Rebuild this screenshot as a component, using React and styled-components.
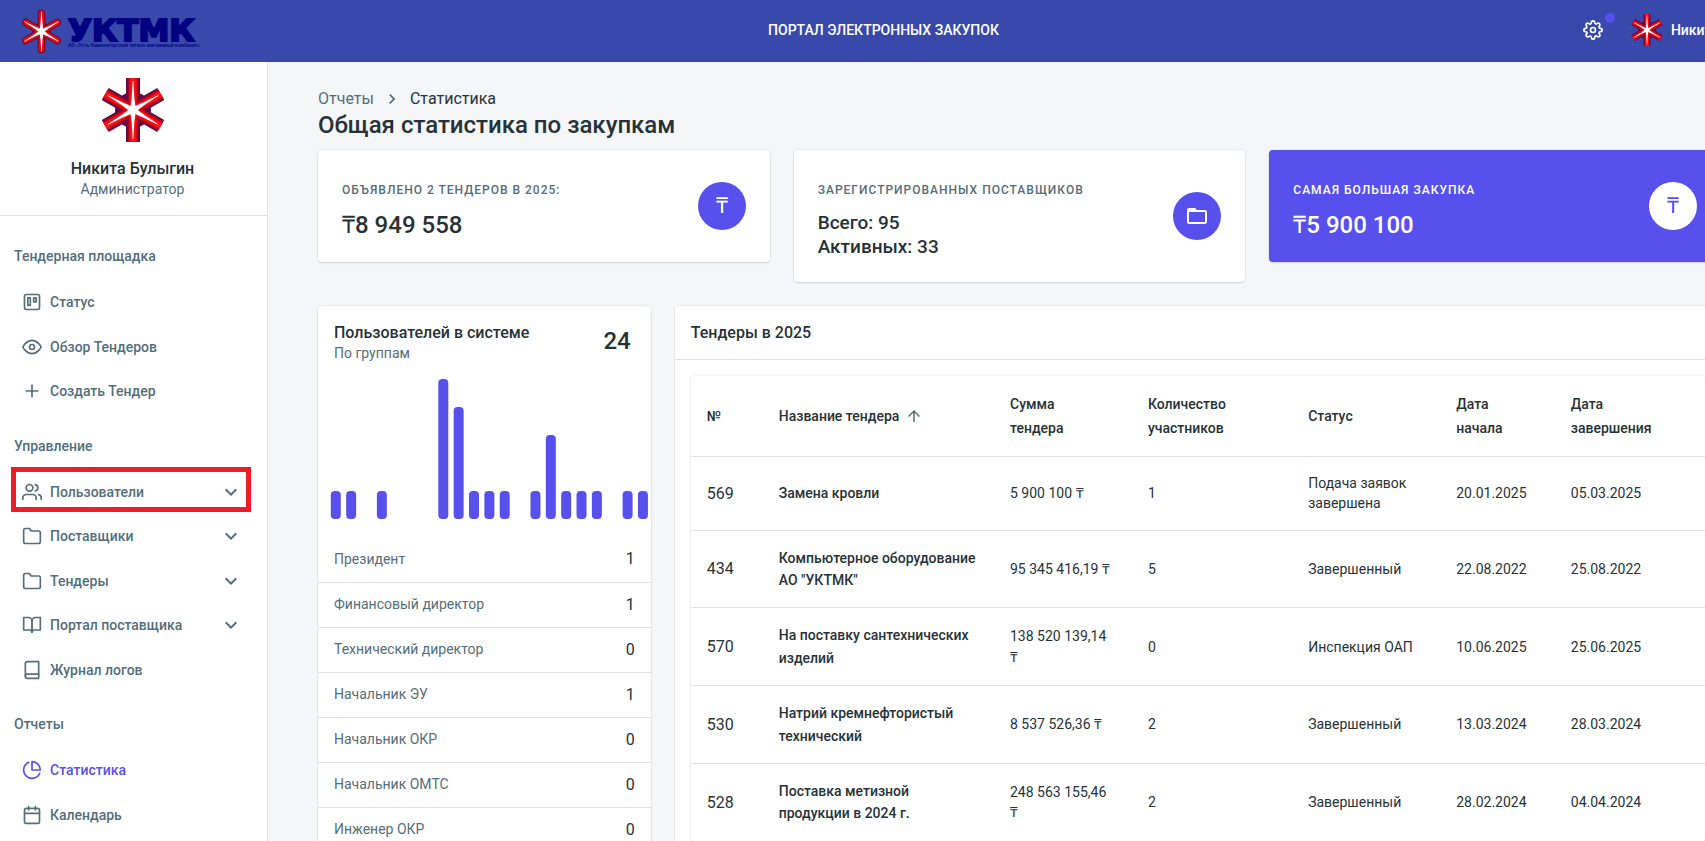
import React from "react";
import styled, { createGlobalStyle, css } from "styled-components";
import {
  FiTrello, FiEye, FiPlus, FiUsers, FiFolder, FiBookOpen, FiBook,
  FiPieChart, FiCalendar, FiSettings,
} from "react-icons/fi";
import { MdExpandMore, MdFolderOpen, MdArrowUpward, MdNavigateNext } from "react-icons/md";

const color = {
  header: "#3949ab",
  accent: "#5850ec",
  page: "#f4f6f8",
  text: "#263238",
  muted: "#546e7a",
  line: "#e0e0e0",
};

const GlobalStyle = createGlobalStyle`
  *, *::before, *::after { box-sizing: border-box; }
  body {
    margin: 0;
    background: ${color.page};
    color: ${color.text};
    font-family: Roboto, "Liberation Sans", sans-serif;
    font-size: 14px;
  }
  h1, h2, p, ul { margin: 0; padding: 0; }
  ul { list-style: none; }
  button { font: inherit; border: 0; background: none; padding: 0; cursor: pointer; }
  a { color: inherit; text-decoration: none; }
`;

const Viewport = styled.div`
  height: 100vh;
  overflow: auto;
  scrollbar-width: none;
`;

const Shell = styled.div`
  width: calc(100% + 62px);
  min-height: 100%;
  display: flex;
  flex-direction: column;
`;

const Header = styled.header`
  height: 62px;
  display: grid;
  grid-template-columns: 1fr auto 1fr;
  align-items: center;
  background: ${color.header};
  color: #fff;
`;

const Brand = styled.a`
  display: flex;
  align-items: center;
  gap: 7px;
  padding-left: 22px;
`;

const BrandText = styled.span`
  display: flex;
  flex-direction: column;
  padding-top: 4px;
  color: #000080;
  white-space: nowrap;
`;

const BrandName = styled.span`
  font: 700 31px/24px "DejaVu Sans", sans-serif;
  -webkit-text-stroke: 2px #000080;
`;

const BrandNote = styled.span`
  font: 500 5px/7px Roboto, sans-serif;
`;

const PortalTitle = styled.p`
  font-weight: 500;
  line-height: 20px;
  padding-bottom: 3px;
`;

const Actions = styled.div`
  display: flex;
  align-items: center;
  justify-content: flex-end;
  margin-right: -12px;
  padding-bottom: 2px;
  white-space: nowrap;
`;

const SettingsButton = styled.button`
  position: relative;
  display: flex;
  color: #fff;
  margin-right: 28px;
`;

const Dot = styled.span`
  position: absolute;
  top: -7px;
  right: -12px;
  width: 10px;
  height: 10px;
  border-radius: 50%;
  background: ${color.accent};
`;

const AccountButton = styled.button`
  display: flex;
  align-items: center;
  gap: 8px;
  color: #fff;
  font-weight: 500;
`;

const Body = styled.div`
  flex: 1;
  display: flex;
`;

const Sidebar = styled.aside`
  flex: none;
  width: 268px;
  background: #fff;
  border-right: 1px solid ${color.line};
`;

const Profile = styled.div`
  display: flex;
  flex-direction: column;
  align-items: center;
  padding: 16px 2px 15px 0;
  border-bottom: 1px solid ${color.line};
`;

const ProfileName = styled.p`
  margin-top: 17px;
  font-size: 16px;
  font-weight: 500;
  line-height: 20px;
`;

const ProfileRole = styled.p`
  color: ${color.muted};
  line-height: 21px;
`;

const Nav = styled.nav`
  display: flex;
  flex-direction: column;
  gap: 8px;
  padding: 16px 13px 16px 14px;
  color: ${color.muted};
  font-weight: 500;
`;

const NavHeading = styled.h2`
  font-size: 14px;
  font-weight: 500;
  line-height: 48px;
`;

const NavItem = styled.li`
  position: relative;
  ${(p) => p.$marked && css`
    &::after {
      content: "";
      position: absolute;
      inset: -3px 3px 2px -3px;
      border: 5px solid #ee1c24;
      pointer-events: none;
    }
  `}
`;

const navRow = css`
  width: 100%;
  display: flex;
  align-items: center;
  gap: 8px;
  padding: 10px 11px 10px 8px;
  line-height: 1.75;
  color: ${(p) => (p.$active ? color.accent : color.muted)};
`;

const NavLink = styled.a`${navRow}`;
const NavToggle = styled.button`
  ${navRow}
  font-weight: 500;
  text-align: left;
`;
const NavLabel = styled.span`flex: 1;`;

const Main = styled.main`
  flex: 1;
  min-width: 0;
  padding: 25px 46px 24px 50px;
`;

const Crumbs = styled.nav`
  display: flex;
  align-items: center;
  gap: 8px;
  font-size: 16px;
  line-height: 24px;
  a, svg { color: ${color.muted}; }
`;

const PageTitle = styled.h1`
  font-size: 24px;
  font-weight: 500;
  line-height: 28px;
  margin-bottom: 11px;
`;

const Grid = styled.div`
  display: grid;
  grid-template-columns: repeat(12, minmax(0, 1fr));
  align-items: start;
  gap: 24px;
`;

const Card = styled.section`
  grid-column: span ${(p) => p.$span};
  background: ${(p) => (p.$filled ? color.accent : "#fff")};
  color: ${(p) => (p.$filled ? "#fff" : color.text)};
  border-radius: 4px;
  box-shadow: 0 0 0 1px rgba(63, 63, 68, 0.05), 0 1px 2px rgba(63, 63, 68, 0.15);
`;

const StatCard = styled(Card)`
  display: flex;
  align-items: center;
  justify-content: space-between;
  padding: 25px 24px 23px;
`;

const StatLabel = styled.h2`
  color: ${(p) => (p.$filled ? "#fff" : color.muted)};
  font-size: 12px;
  font-weight: 500;
  line-height: 30px;
  letter-spacing: 1px;
  text-transform: uppercase;
  margin-bottom: 6px;
`;

const StatValue = styled.p`
  font-size: ${(p) => (p.$small ? 19 : 24)}px;
  font-weight: 500;
  line-height: ${(p) => (p.$small ? 24 : 28)}px;
`;

const Badge = styled.span`
  flex: none;
  width: 48px;
  height: 48px;
  display: flex;
  align-items: center;
  justify-content: center;
  margin-bottom: 2px;
  border-radius: 50%;
  font-size: 22px;
  line-height: 24px;
  background: ${(p) => (p.$inverse ? "#fff" : color.accent)};
  color: ${(p) => (p.$inverse ? color.accent : "#fff")};
`;

const UsersHeader = styled.div`
  display: flex;
  justify-content: space-between;
  align-items: center;
  padding: 16px 20px 14px 16px;
`;

const PanelTitle = styled.h2`
  font-size: 16px;
  font-weight: 500;
  line-height: 21px;
`;

const PanelSubtitle = styled.p`
  color: ${color.muted};
  line-height: 21px;
`;

const UsersTotal = styled.p`
  font-size: 24px;
  font-weight: 500;
  line-height: 28px;
  padding-bottom: 4px;
`;

const ChartSvg = styled.svg`
  display: block;
  width: 100%;
  height: 141px;
  margin-bottom: 18px;
  fill: ${color.accent};
`;

const GroupRow = styled.li`
  display: flex;
  align-items: center;
  justify-content: space-between;
  height: 45px;
  padding: 0 16px 2px;
  color: ${color.muted};
  & + & { border-top: 1px solid ${color.line}; }
`;

const GroupCount = styled.span`
  color: ${color.text};
  font-size: 16px;
`;

const TendersHeader = styled.div`
  padding: 16px;
  border-bottom: 1px solid ${color.line};
`;

const TableFrame = styled.div`
  margin: 16px;
  border-radius: 4px;
  box-shadow: 0 0 0 1px rgba(63, 63, 68, 0.05), 0 1px 2px rgba(63, 63, 68, 0.15);
`;

const Table = styled.table`
  width: 100%;
  table-layout: fixed;
  border-spacing: 0;
`;

const HeadCell = styled.th`
  width: ${(p) => p.$width};
  padding: 16px;
  border-bottom: 1px solid ${color.line};
  font-weight: 500;
  line-height: 24px;
  text-align: left;
`;

const SortButton = styled.button`
  display: flex;
  align-items: center;
  gap: 6px;
  color: ${color.text};
  font-weight: 500;
  white-space: nowrap;
  svg { color: ${color.muted}; }
`;

const Cell = styled.td`
  padding: 16px;
  border-bottom: 1px solid ${color.line};
  font-size: ${(p) => (p.$number ? 16 : 14)}px;
  line-height: 1.45;
`;

const NameCell = styled(Cell)`
  font-weight: 500;
  line-height: 1.6;
`;

const arms = [0, 60, 120, 180, 240, 300];

function Star({ width, height, slim }) {
  const layers = slim
    ? [["#5a0a3c", 11], ["#b5081c", 9], ["#ee1016", 6]]
    : [["#560c48", 14], ["#a00628", 11], ["#e00618", 8], ["#ff1414", 5]];
  return (
    <svg width={width} height={height} viewBox={slim ? "4 0 56 64" : "0 0 64 64"} aria-hidden="true">
      <circle cx="32" cy="32" r={slim ? 13 : 18} fill="#560c48" />
      <circle cx="32" cy="32" r={slim ? 11 : 15} fill="#a00628" />
      <circle cx="32" cy="32" r={slim ? 9 : 12} fill="#e00618" />
      {layers.map(([stroke, w]) => (
        <g key={stroke} stroke={stroke} strokeWidth={w} strokeLinecap={slim ? "round" : "butt"}>
          {arms.map((a) => (
            <line key={a} x1="32" y1="32" x2="32" y2={slim ? 6 : 0} transform={`rotate(${a} 32 32)`} />
          ))}
        </g>
      ))}
      <circle cx="32" cy="32" r="4" fill="#fff" />
      {arms.map((a) => (
        <path key={a} d="M29 32 L30.7 20 L31.7 3 L32.3 3 L33.3 20 L35 32 Z" fill="#fff" transform={`rotate(${a} 32 32)`} />
      ))}
    </svg>
  );
}

const menu = [
  {
    title: "Тендерная площадка",
    items: [
      { icon: FiTrello, label: "Статус" },
      { icon: FiEye, label: "Обзор Тендеров" },
      { icon: FiPlus, label: "Создать Тендер" },
    ],
  },
  {
    title: "Управление",
    items: [
      { icon: FiUsers, label: "Пользователи", expandable: true, marked: true },
      { icon: FiFolder, label: "Поставщики", expandable: true },
      { icon: FiFolder, label: "Тендеры", expandable: true },
      { icon: FiBookOpen, label: "Портал поставщика", expandable: true },
      { icon: FiBook, label: "Журнал логов" },
    ],
  },
  {
    title: "Отчеты",
    items: [
      { icon: FiPieChart, label: "Статистика", active: true },
      { icon: FiCalendar, label: "Календарь" },
    ],
  },
];

const usersByGroup = [1, 1, 0, 1, 0, 0, 0, 5, 4, 1, 1, 1, 0, 1, 3, 1, 1, 1, 0, 1, 1];

const groups = [
  ["Президент", 1],
  ["Финансовый директор", 1],
  ["Технический директор", 0],
  ["Начальник ЭУ", 1],
  ["Начальник ОКР", 0],
  ["Начальник ОМТС", 0],
  ["Инженер ОКР", 0],
];

const tenders = [
  ["569", "Замена кровли", "5 900 100", 1, "Подача заявок завершена", "20.01.2025", "05.03.2025"],
  ["434", "Компьютерное оборудование АО \"УКТМК\"", "95 345 416,19", 5, "Завершенный", "22.08.2022", "25.08.2022"],
  ["570", "На поставку сантехнических изделий", "138 520 139,14", 0, "Инспекция ОАП", "10.06.2025", "25.06.2025"],
  ["530", "Натрий кремнефтористый технический", "8 537 526,36", 2, "Завершенный", "13.03.2024", "28.03.2024"],
  ["528", "Поставка метизной продукции в 2024 г.", "248 563 155,46", 2, "Завершенный", "28.02.2024", "04.04.2024"],
];

const keepTogether = (s) => s.replace(/ /g, "\u00a0");

function MenuItem({ icon: Icon, label, expandable, marked, active }) {
  const Row = expandable ? NavToggle : NavLink;
  const props = expandable ? { type: "button", "aria-expanded": false } : { href: "#" };
  return (
    <NavItem $marked={marked}>
      <Row {...props} $active={active}>
        <Icon size={20} />
        <NavLabel>{label}</NavLabel>
        {expandable && <MdExpandMore size={24} />}
      </Row>
    </NavItem>
  );
}

function GroupChart() {
  const step = 15.37;
  return (
    <ChartSvg viewBox="0 0 333 141" role="img" aria-label="Пользователей по группам">
      {usersByGroup.map((n, i) =>
        n ? <rect key={i} x={12.8 + i * step} y={141 - n * 28} width="10" height={n * 28} rx="4" /> : null
      )}
    </ChartSvg>
  );
}

export default function App() {
  return (
    <>
      <GlobalStyle />
      <Viewport>
        <Shell>
          <Header>
            <Brand href="#">
              <Star width={39} height={45} slim />
              <BrandText>
                <BrandName>УКТМК</BrandName>
                <BrandNote>АО «Усть-Каменогорский титано-магниевый комбинат»</BrandNote>
              </BrandText>
            </Brand>
            <PortalTitle>ПОРТАЛ ЭЛЕКТРОННЫХ ЗАКУПОК</PortalTitle>
            <Actions>
              <SettingsButton type="button" aria-label="Настройки">
                <FiSettings size={20} />
                <Dot />
              </SettingsButton>
              <AccountButton type="button">
                <Star width={32} height={32} />
                Никита Булыгин
              </AccountButton>
            </Actions>
          </Header>
          <Body>
            <Sidebar>
              <Profile>
                <Star width={64} height={64} />
                <ProfileName>Никита Булыгин</ProfileName>
                <ProfileRole>Администратор</ProfileRole>
              </Profile>
              <Nav>
                {menu.map((section) => (
                  <div key={section.title}>
                    <NavHeading>{section.title}</NavHeading>
                    <ul>
                      {section.items.map((item) => <MenuItem key={item.label} {...item} />)}
                    </ul>
                  </div>
                ))}
              </Nav>
            </Sidebar>
            <Main>
              <Crumbs>
                <a href="#">Отчеты</a>
                <MdNavigateNext size={20} />
                <span>Статистика</span>
              </Crumbs>
              <PageTitle>Общая статистика по закупкам</PageTitle>
              <Grid>
                <StatCard $span={4}>
                  <div>
                    <StatLabel>Объявлено 2 тендеров в 2025:</StatLabel>
                    <StatValue>₸8 949 558</StatValue>
                  </div>
                  <Badge>₸</Badge>
                </StatCard>
                <StatCard $span={4}>
                  <div>
                    <StatLabel>Зарегистрированных поставщиков</StatLabel>
                    <StatValue $small>Всего: 95</StatValue>
                    <StatValue $small>Активных: 33</StatValue>
                  </div>
                  <Badge><MdFolderOpen size={24} /></Badge>
                </StatCard>
                <StatCard $span={4} $filled>
                  <div>
                    <StatLabel $filled>Самая большая закупка</StatLabel>
                    <StatValue>₸5 900 100</StatValue>
                  </div>
                  <Badge $inverse>₸</Badge>
                </StatCard>
                <Card $span={3}>
                  <UsersHeader>
                    <div>
                      <PanelTitle>Пользователей в системе</PanelTitle>
                      <PanelSubtitle>По группам</PanelSubtitle>
                    </div>
                    <UsersTotal>24</UsersTotal>
                  </UsersHeader>
                  <GroupChart />
                  <ul>
                    {groups.map(([name, count]) => (
                      <GroupRow key={name}>
                        {name}
                        <GroupCount>{count}</GroupCount>
                      </GroupRow>
                    ))}
                  </ul>
                </Card>
                <Card $span={9}>
                  <TendersHeader><PanelTitle>Тендеры в 2025</PanelTitle></TendersHeader>
                  <TableFrame>
                    <Table>
                      <thead>
                        <tr>
                          <HeadCell $width="7.1%">№</HeadCell>
                          <HeadCell $width="22.8%">
                            <SortButton type="button">
                              Название тендера <MdArrowUpward size={18} />
                            </SortButton>
                          </HeadCell>
                          <HeadCell $width="13.6%">Сумма<br />тендера</HeadCell>
                          <HeadCell $width="15.8%">Количество<br />участников</HeadCell>
                          <HeadCell $width="14.6%">Статус</HeadCell>
                          <HeadCell $width="11.3%">Дата<br />начала</HeadCell>
                          <HeadCell $width="14.8%">Дата<br />завершения</HeadCell>
                        </tr>
                      </thead>
                      <tbody>
                        {tenders.map(([id, name, sum, members, status, start, end]) => (
                          <tr key={id}>
                            <Cell $number>{id}</Cell>
                            <NameCell>{name}</NameCell>
                            <Cell>{keepTogether(sum)} ₸</Cell>
                            <Cell>{members}</Cell>
                            <Cell>{status}</Cell>
                            <Cell>{start}</Cell>
                            <Cell>{end}</Cell>
                          </tr>
                        ))}
                      </tbody>
                    </Table>
                  </TableFrame>
                </Card>
              </Grid>
            </Main>
          </Body>
        </Shell>
      </Viewport>
    </>
  );
}
